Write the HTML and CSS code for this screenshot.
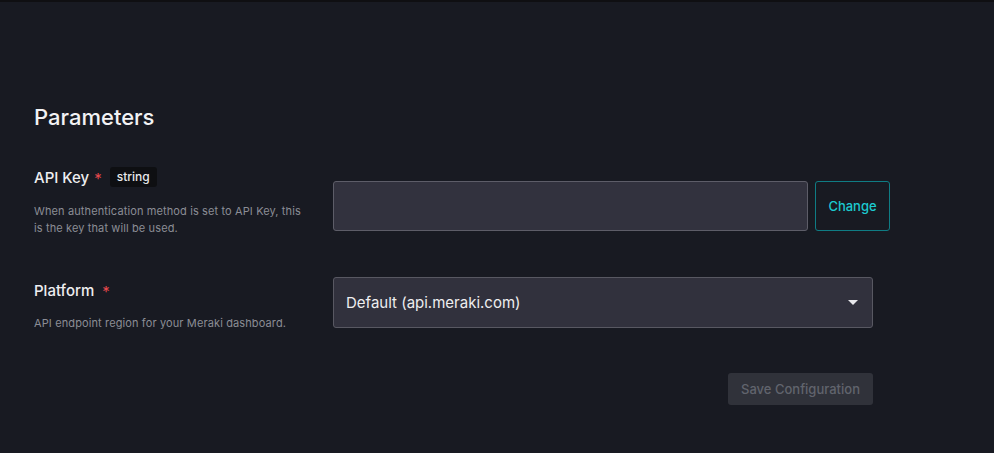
FILE: index.html
```html
<!DOCTYPE html>
<html>
<head>
<meta charset="utf-8">
<link rel="stylesheet" href="styles.css">
</head>
<body>
<div class="topbar"></div>
<main class="page">
  <h2 class="title">Parameters</h2>
  <div class="form">
    <div class="field">
      <div class="meta">
        <div class="label-row">
          <span class="label">API Key</span>
          <span class="req req-tight">*</span>
          <span class="badge">string</span>
        </div>
        <p class="desc">When authentication method is set to API Key, this is the key that will be used.</p>
      </div>
      <div class="control control-key">
        <div class="input"></div>
        <button class="btn-change">Change</button>
      </div>
    </div>
    <div class="field field-platform">
      <div class="meta meta-platform">
        <div class="label-row">
          <span class="label">Platform</span>
          <span class="req">*</span>
        </div>
        <p class="desc">API endpoint region for your Meraki dashboard.</p>
      </div>
      <div class="control">
        <div class="select">
          <span>Default (api.meraki.com)</span>
          <svg class="caret" width="10" height="6" viewBox="0 0 10 6"><path d="M0 0h10L5 5z" fill="#e8e8ec"/></svg>
        </div>
      </div>
    </div>
    <div class="actions">
      <button class="btn-save">Save Configuration</button>
    </div>
  </div>
</main>
</body>
</html>
```
FILE: styles.css
```css
* { box-sizing: border-box; }
html, body { margin: 0; padding: 0; }
body {
  background: #181a22;
  font-family: Inter, "Open Sans", sans-serif;
  color: #eeeef0;
  height: 453px;
  overflow: hidden;
}
.topbar {
  height: 2px;
  background: #0f0f12;
}
.page {
  padding: 101px 0 0 34px;
}
.title {
  margin: 0;
  font-size: 22px;
  line-height: 28px;
  font-weight: 500;
  color: #f2f2f4;
}
.form {
  margin-top: 36px;
  width: 839px;
}
.field {
  display: grid;
  grid-template-columns: 299px 540px;
  align-items: start;
}
.field-platform {
  margin-top: 40px;
}
.label-row {
  display: flex;
  align-items: center;
  height: 20px;
}
.label {
  font-size: 15px;
  font-weight: 500;
  color: #eeeef0;
}
.req {
  color: #e5484d;
  font-size: 15px;
  margin-left: 8px;
  position: relative;
  top: 1px;
}
.req-tight {
  margin-left: 5px;
}
.badge {
  margin-left: 8px;
  background: #0e0f12;
  color: #e8e8ea;
  font-size: 12px;
  font-weight: 500;
  height: 20px;
  line-height: 20px;
  padding: 0 7px;
  border-radius: 3px;
}
.desc {
  margin: 16px 0 0;
  font-size: 11px;
  line-height: 17px;
  letter-spacing: 0.12px;
  color: #8b8d95;
  width: 275px;
}
.meta-platform {
  padding-top: 3px;
}
.meta-platform .desc {
  margin-top: 15px;
}
.control-key {
  margin-top: 14px;
  display: flex;
  gap: 7px;
}
.input {
  width: 475px;
  height: 50px;
  background: #32323e;
  border: 1px solid #5d5d68;
  border-radius: 3px;
  flex: none;
}
.btn-change {
  width: 75px;
  height: 50px;
  flex: none;
  background: transparent;
  border: 1px solid #0f7c84;
  border-radius: 3px;
  color: #1ccad0;
  font-family: Inter, sans-serif;
  font-size: 13px;
  font-weight: 500;
  padding: 0;
}
.select {
  height: 51px;
  background: #31313d;
  border: 1px solid #585862;
  border-radius: 3px;
  display: flex;
  align-items: center;
  justify-content: space-between;
  padding: 0 14px 0 12px;
  font-size: 15px;
  color: #eeeef0;
}
.caret { display: block; margin-top: 1px; }
.actions {
  display: flex;
  justify-content: flex-end;
  margin-top: 41px;
}
.btn-save {
  width: 145px;
  height: 32px;
  background: #30323a;
  border: none;
  border-radius: 3px;
  color: #61646d;
  font-family: Inter, sans-serif;
  font-size: 13px;
  font-weight: 500;
  padding: 0;
}
```
